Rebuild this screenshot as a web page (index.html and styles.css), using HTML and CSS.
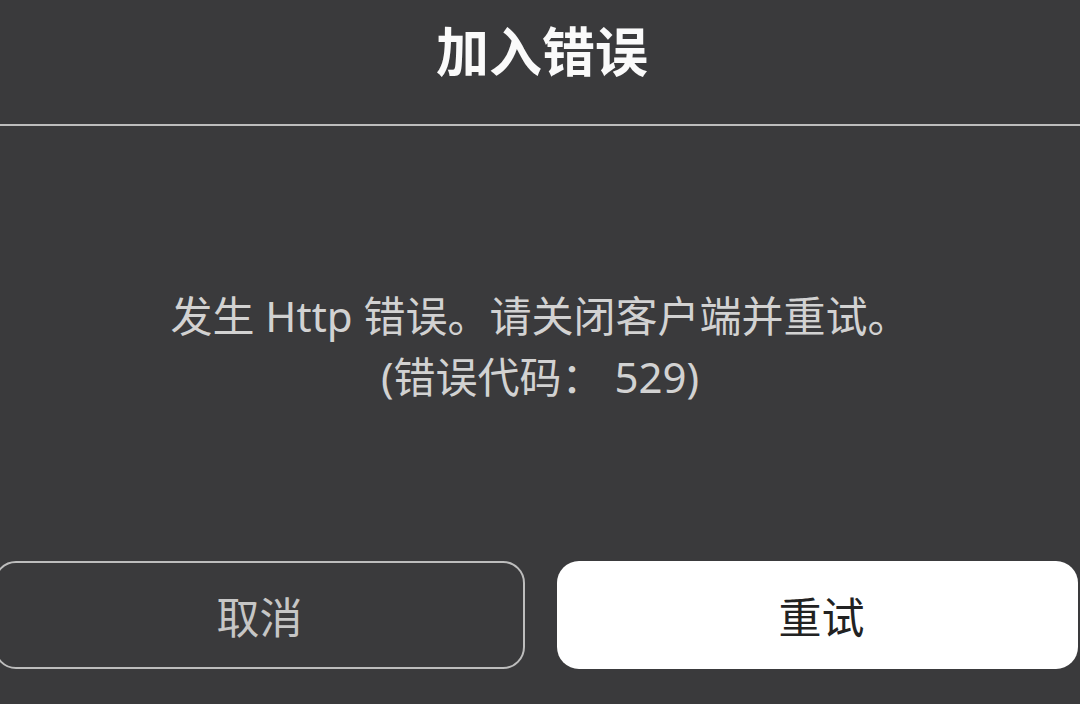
FILE: index.html
```html
<!DOCTYPE html>
<html lang="zh-CN">
<head>
<meta charset="utf-8">
<title>加入错误</title>
<link rel="stylesheet" href="styles.css">
</head>
<body>
<div class="dialog">
  <header class="header">
    <h1 class="title">加入错误</h1>
  </header>
  <div class="divider"></div>
  <main class="body">
    <p class="message">发生 Http 错误。请关闭客户端并重试。<br>(错误代码： 529)</p>
  </main>
  <footer class="actions">
    <button class="btn btn-cancel">取消</button>
    <button class="btn btn-retry">重试</button>
  </footer>
</div>
</body>
</html>
```

FILE: styles.css
```css
* { box-sizing: border-box; }
html, body {
  margin: 0;
  padding: 0;
  background: #3a3a3c;
  overflow: hidden;
}
body {
  font-family: "Noto Sans", "Noto Sans CJK SC", sans-serif;
}
.dialog {
  width: 1080px;
  height: 704px;
  display: flex;
  flex-direction: column;
}
.header {
  height: 124px;
  display: flex;
  align-items: center;
  justify-content: center;
  padding-left: 4px;
  padding-bottom: 22px;
}
.title {
  margin: 0;
  font-size: 53px;
  font-weight: 700;
  color: #fafafa;
  line-height: 1;
}
.divider {
  height: 2px;
  background: #bdbdbd;
}
.body {
  flex: 1;
  display: flex;
  align-items: center;
  justify-content: center;
  padding-top: 4px;
}
.message {
  margin: 0;
  text-align: center;
  font-size: 42px;
  line-height: 61px;
  color: #d2d2d2;
}
.actions {
  display: grid;
  grid-template-columns: 531px 521px;
  column-gap: 32px;
  margin-left: -6px;
  padding-bottom: 35px;
}
.btn {
  height: 108px;
  border-radius: 22px;
  font-family: "Noto Sans", "Noto Sans CJK SC", sans-serif;
  font-size: 43px;
  display: flex;
  align-items: center;
  justify-content: center;
  padding: 0;
}
.btn-cancel {
  background: transparent;
  border: 2px solid #bdbdbd;
  color: #c6c6c6;
}
.btn-retry {
  background: #ffffff;
  border: none;
  color: #222222;
  padding-left: 8px;
}
```
